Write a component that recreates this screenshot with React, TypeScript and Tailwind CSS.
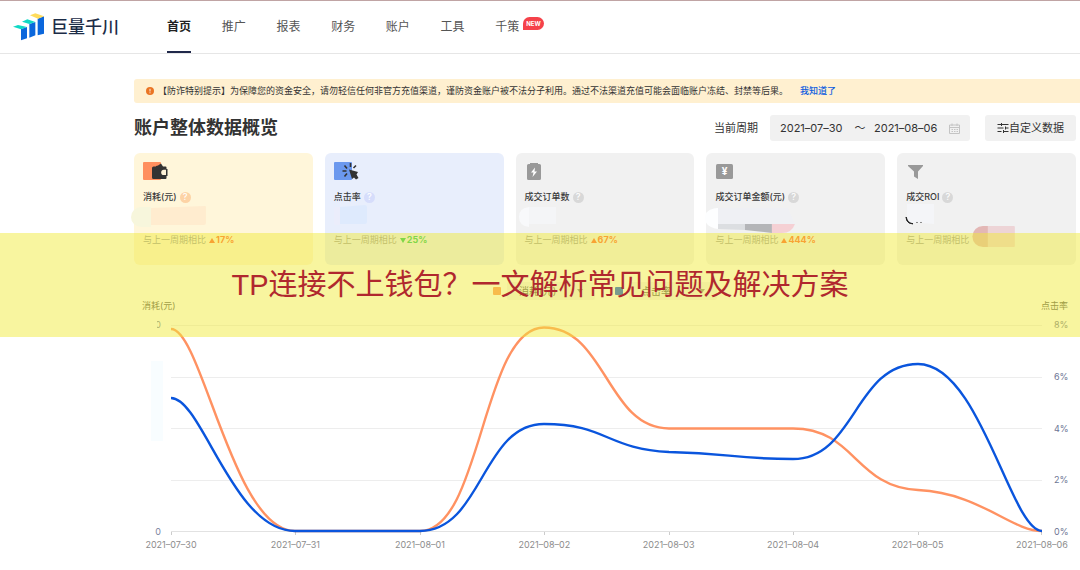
import type { ReactNode } from 'react';

const navItems = ['首页', '推广', '报表', '财务', '账户', '工具', '千策'];

const dates = [
  '2021–07–30', '2021–07–31', '2021–08–01', '2021–08–02',
  '2021–08–03', '2021–08–04', '2021–08–05', '2021–08–06',
];

const leftTicks = ['0', '', '', '', '0'];
const rightTicks = ['8%', '6%', '4%', '2%', '0%'];

type Metric = {
  name: string;
  delta?: string;
  down?: boolean;
  card: string;
  help: string;
  icon: ReactNode;
  mask: ReactNode;
};

const metrics: Metric[] = [
  {
    name: '消耗(元)',
    delta: '17%',
    card: 'bg-[#fff6da]',
    help: 'bg-[#fdd3a5]',
    icon: (
      <>
        <rect y="1" width="18" height="18" rx="1" fill="#ff8f5e" />
        <path d="M10.5 5.5H13V5l2-.5 3-2 2 3h2.500a1 1 0 0 1 1 1V8h1v7h-1v2a1 1 0 0 1-1 1h-12A1.500 1.500 0 0 1 9 16.500V7a1.500 1.500 0 0 1 1.500-1.500Z" fill="#333" />
        <path d="M23 8.800h-2.200a2.600 2.600 0 0 0 0 5.200H23Z" fill="#fff3d8" />
      </>
    ),
    mask: (
      <>
        <path d="M8 3H-2a10 10 0 0 0 0 20H8Z" fill="#f7f6dc" />
        <path d="M8 4 62 2q1 0 1 1v16q0 2-2 2H8Z" fill="#ffeccf" />
      </>
    ),
  },
  {
    name: '点击率',
    delta: '25%',
    down: true,
    card: 'bg-[#e8eefc]',
    help: 'bg-[#d6ddfb]',
    icon: (
      <>
        <rect y="1" width="18" height="18" rx="1" fill="#6b98ee" />
        <path d="m15 8.500 9 2.500-1.500 2.500 2 3.500-2.500 1.500-2-2-2 1.500Z" fill="#333" />
        <path d="M16.500 2v4M10.500 4.500l2.500 3M8.500 10h4M13 12.500l-2.500 3M22 4.500 19.500 7" stroke="#333" strokeWidth="1.600" fill="none" />
      </>
    ),
    mask: (
      <>
        <path d="M0 5q0-2 2-2h4v18H2q-2 0-2-2Z" fill="#ebedfb" />
        <path d="M6 3 31 1q2 0 2 2v15q0 2-2 2H6Z" fill="#deeafd" />
      </>
    ),
  },
  {
    name: '成交订单数',
    delta: '67%',
    card: 'bg-[#f1f1f1]',
    help: 'bg-[#d8d8d8]',
    icon: (
      <>
        <path d="M3.500 3H5V2h8v1h1.500A1.500 1.500 0 0 1 16 4.500v13a1.500 1.500 0 0 1-1.500 1.500h-11A1.500 1.500 0 0 1 2 17.500v-13A1.500 1.500 0 0 1 3.500 3Z" fill="#999" />
        <path d="m10 6.500-4 5h2.500L7.500 16l4.500-5.500H9.500Z" fill="#fff" />
      </>
    ),
    mask: (
      <>
        <path d="M4 3q-10 1-10 10t10 10Z" fill="#f8f9fb" />
        <path d="M4 3h27v17H4Z" fill="#f4f5f7" />
      </>
    ),
  },
  {
    name: '成交订单金额(元)',
    delta: '444%',
    card: 'bg-[#f1f1f1]',
    help: 'bg-[#d8d8d8]',
    icon: (
      <>
        <rect x="1" y="3" width="17" height="15" rx="1.500" fill="#999" />
        <text x="9.500" y="14" textAnchor="middle" fontSize="10" fontWeight="700" fill="#fff">¥</text>
      </>
    ),
    mask: (
      <>
        <path d="M3 4q-13 1-13 10t13 11Z" fill="#fdfeff" />
        <path d="M3 4h70l7 16H3Z" fill="#eff0f4" />
        <path d="M3 20h27v6L3 25Z" fill="#dcdee1" />
        <path d="M30 20h27v9l-27-3Z" fill="#b4b5b8" />
        <path d="M57 20h23q-3 9-13 9H57Z" fill="#f5d0d4" />
      </>
    ),
  },
  {
    name: '成交ROI',
    card: 'bg-[#f1f1f1]',
    help: 'bg-[#d8d8d8]',
    icon: <path d="M2 4h15v1l-5 5.500V18l-4-2.500v-5L2 5Z" fill="#999" />,
    mask: (
      <>
        <path d="M0 13q2 4 6 6l1 1-4-1q-3-2-3-6Z" fill="#222" stroke="#222" />
        <path d="M1 0h27v20l-12-1H6Q1 18 1 12Z" fill="#f4f5f8" />
        <path d="M10 18.500h2M14 18.500h2" stroke="#888" />
        <path d="M82 22h-5a10 10 0 0 0 0 21h5Z" fill="#e3b7b5" />
        <path d="M82 22h26q1 0 1 1v19q0 1-1 1H82Z" fill="#edd4d6" />
      </>
    ),
  },
];

function Logo() {
  return (
    <a href="#" className="flex w-[155px] shrink-0 items-center gap-1.5 pl-[13px] text-[17px] leading-7 font-medium text-[#1c2c47]">
      <svg viewBox="0 0 96 84" className="h-7 w-8" aria-hidden="true">
        <path d="m24 48 18-6v34l-18 6Z" fill="#0b67dc" />
        <path d="m49 33 18-6v40l-18 7Z" fill="#0b67dc" />
        <path d="m74 17 19-7v52l-19 5Z" fill="#0b67dc" />
        <path d="m0 41 15-5 27 6-18 7Z" fill="#0fd9c5" />
        <path d="m27 26 16-7 24 8-18 6Z" fill="#0fd9c5" />
        <path d="m51 7 16-6 26 9-18 7Z" fill="#ffdc5c" />
      </svg>
      <span className="whitespace-nowrap">巨量千川</span>
    </a>
  );
}

function Header() {
  return (
    <header className="flex h-[54px] items-stretch border-t border-b border-t-[#c0a4a4] border-b-[#e6e6e6]">
      <Logo />
      <nav className="ml-3 grid w-[383px] grid-cols-7 text-[12px] text-[#555]">
        {navItems.map((item, i) => (
          <div key={item} className="flex">
            <a
              href="#"
              className={i === 0
                ? 'flex items-center border-b-2 border-[#20284a] pt-0.5 font-bold whitespace-nowrap text-[#222]'
                : 'flex items-center border-b-2 border-transparent pt-0.5 whitespace-nowrap'}
            >
              {item}
            </a>
            {item === '千策' && (
              <span className="mt-4 ml-1 flex h-[13px] items-center rounded-t-full rounded-r-full bg-[#f5424a] px-[3px] text-[6px] leading-none font-bold text-white">
                NEW
              </span>
            )}
          </div>
        ))}
      </nav>
    </header>
  );
}

function Notice() {
  return (
    <div className="mt-[25px] flex h-6 items-center rounded-l-[3px] bg-[#fff0d0] pl-3 text-[9px] whitespace-nowrap text-[#333]">
      <svg viewBox="0 0 8 8" className="mr-1 size-2" aria-hidden="true">
        <circle cx="4" cy="4" r="4" fill="#ea7423" />
        <path d="M4 1.800v2.700M4 5.300v1" stroke="#fff" strokeWidth=".9" />
      </svg>
      <p>【防诈特别提示】为保障您的资金安全，请勿轻信任何非官方充值渠道，谨防资金账户被不法分子利用。通过不法渠道充值可能会面临账户冻结、封禁等后果。</p>
      <a href="#" className="ml-3 font-medium text-[#0a5be0]">我知道了</a>
    </div>
  );
}

function Toolbar() {
  return (
    <div className="mt-3 mr-1 flex h-[26px] items-center text-[11px] text-[#333]">
      <h1 className="mr-auto text-[18px] leading-[26px] font-bold">账户整体数据概览</h1>
      <label htmlFor="start">当前周期</label>
      <div className="ml-3 flex h-full items-center rounded-[3px] bg-[#f1f1f1] px-2.5">
        <input id="start" defaultValue={dates[0]} className="w-[66px] outline-none" />
        <span className="w-7 text-center">～</span>
        <input aria-label="结束日期" defaultValue={dates[7]} className="w-[66px] outline-none" />
        <svg viewBox="0 0 11 11" className="ml-[9px] size-[11px]" fill="none" stroke="#c4c4c4" aria-hidden="true">
          <path d="M.5 2h10v8.500H.5ZM.5 4.500h10M3 .5V3M8 .5V3M2.500 6.500h1.500M5 6.500h1.500M7.500 6.500H9M2.500 8.500h1.500M5 8.500h1.500M7.500 8.500H9" />
        </svg>
      </div>
      <button type="button" className="ml-[15px] flex h-full items-center rounded-[3px] bg-[#f1f1f1] px-3">
        <svg viewBox="0 0 12 10" className="h-2.5 w-3" fill="none" stroke="#333" aria-hidden="true">
          <path d="M.5 1.500h11M.5 5h6M8.500 5h3M.5 8.500h4M6.500 8.500h5M4.500 0v3M8.500 3.500v3M6.500 7v3" />
        </svg>
        自定义数据
      </button>
    </div>
  );
}

function MetricCard({ metric }: { metric: Metric }) {
  return (
    <article className={`h-28 rounded-md pt-2 pl-[9px] text-[9px] leading-3 ${metric.card}`}>
      <svg viewBox="0 0 26 20" className="h-5 w-[26px]" aria-hidden="true">{metric.icon}</svg>
      <div className="mt-2.5 flex items-center gap-[3px] font-medium text-[#3a3a3a]">
        {metric.name}
        <span className={`flex size-[11px] items-center justify-center rounded-full font-medium text-white ${metric.help}`}>?</span>
      </div>
      <svg className="h-[31px] w-full overflow-visible" viewBox="0 0 170 31" preserveAspectRatio="xMinYMin" aria-hidden="true">
        <g transform="translate(0 1)">{metric.mask}</g>
      </svg>
      <p className="flex items-center text-[#999]">
        与上一周期相比
        {metric.delta && (
          <span className={metric.down ? 'ml-[3px] flex items-center font-bold text-[#18c558]' : 'ml-[3px] flex items-center font-bold text-[#ff6230]'}>
            <svg viewBox="0 0 6 5" className="mr-px h-[5px] w-1.5" fill="currentColor" aria-hidden="true">
              <path d={metric.down ? 'M0 0h6L3 5Z' : 'M0 5h6L3 0Z'} />
            </svg>
            {metric.delta}
          </span>
        )}
      </p>
    </article>
  );
}

function SeriesSelect({ name, color }: { name: string; color: string }) {
  return (
    <label className="flex items-center gap-1.5">
      <span className={`size-2 rounded-[1px] ${color}`} />
      <span className="relative flex">
        <select aria-label={name} className="h-[18px] w-[88px] appearance-none rounded-[2px] bg-[#f4f4f4] pl-3 text-[10px] text-[#555]">
          <option>{name}</option>
        </select>
        <svg viewBox="0 0 6 4" className="absolute top-[7px] right-3 h-1 w-1.5" aria-hidden="true">
          <path d="M0 0h6L3 4Z" fill="#888" />
        </svg>
      </span>
    </label>
  );
}

function Chart() {
  return (
    <section className="mt-[17px] mr-1 text-[9px] leading-3 text-[#888]">
      <div className="flex h-[18px] justify-center gap-5">
        <SeriesSelect name="消耗(元)" color="bg-[#ff915e]" />
        <SeriesSelect name="点击率" color="bg-[#0a55dd]" />
      </div>
      <div className="flex justify-between px-2 text-[#555]">
        <span>消耗(元)</span>
        <span>点击率</span>
      </div>
      <div className="mt-[13px] flex">
        <div className="relative flex h-[207px] w-[37px] flex-col items-end justify-between pr-2.5 text-[#7d84a0]">
          <div className="absolute -top-2 right-3.5 h-4 w-3 bg-white" />
          <div className="absolute top-9 right-2 h-20 w-3 bg-[#f8fdff]" />
          {leftTicks.map((t, i) => (
            <span key={i} className="flex h-0 items-center">{t}</span>
          ))}
        </div>
        <div className="min-w-0 flex-1">
          <svg viewBox="0 0 871 207" preserveAspectRatio="none" className="h-[207px] w-full overflow-visible" fill="none" aria-hidden="true">
            <path d="M0 .5h871M0 52.500h871M0 103.500h871M0 155.500h871" stroke="#ededed" />
            <path d="M0 206.500h871" stroke="#e2e2e2" />
            <path d="M.5 207v3M124.500 207v3M249.500 207v3M373.500 207v3M498.500 207v3M622.500 207v3M747.500 207v3M870.500 207v3" stroke="#ccc" />
            <path
              d="M0 4C31 4 62 206 124 206H249C311 206 311 2.500 373 2.500C435 2.500 436 103.500 498 103.500H622C684 103.500 684 162 747 165C809 168 840 206 871 206"
              stroke="#ff9262"
              strokeWidth="2.400"
            />
            <path
              d="M0 73C31 73 62 206 124 206H249C311 206 311 99 373 99C435 99 436 124 498 127C560 128 560 134 622 134C684 134 684 39 747 39C809 39 840 206 871 206"
              stroke="#0a55dd"
              strokeWidth="2.400"
            />
          </svg>
          <div className="mt-[7px] flex justify-between text-[#8c8c8c]">
            {dates.map((d) => (
              <span key={d} className="flex w-0 justify-center whitespace-nowrap">{d}</span>
            ))}
          </div>
        </div>
        <div className="flex h-[207px] w-[34px] flex-col justify-between pl-3 text-[#6d7594]">
          {rightTicks.map((t) => (
            <span key={t} className="flex h-0 items-center">{t}</span>
          ))}
        </div>
      </div>
    </section>
  );
}

export default function App() {
  return (
    <div className="relative min-h-screen overflow-hidden bg-white font-['Inter','Noto_Sans_CJK_SC',sans-serif]">
      <Header />
      <main className="pl-[134px]">
        <Notice />
        <Toolbar />
        <div className="mt-3 mr-1 grid grid-cols-5 gap-3">
          {metrics.map((m) => <MetricCard key={m.name} metric={m} />)}
        </div>
        <Chart />
      </main>
      <div className="absolute inset-x-0 top-[233px] flex h-[104px] items-center justify-center bg-[#f0ea37]/48">
        <h2 className="font-['Liberation_Sans','Noto_Sans_CJK_SC',sans-serif] text-[29px] leading-9 whitespace-nowrap text-[#b0282e]">
          TP连接不上钱包？一文解析常见问题及解决方案
        </h2>
      </div>
    </div>
  );
}
